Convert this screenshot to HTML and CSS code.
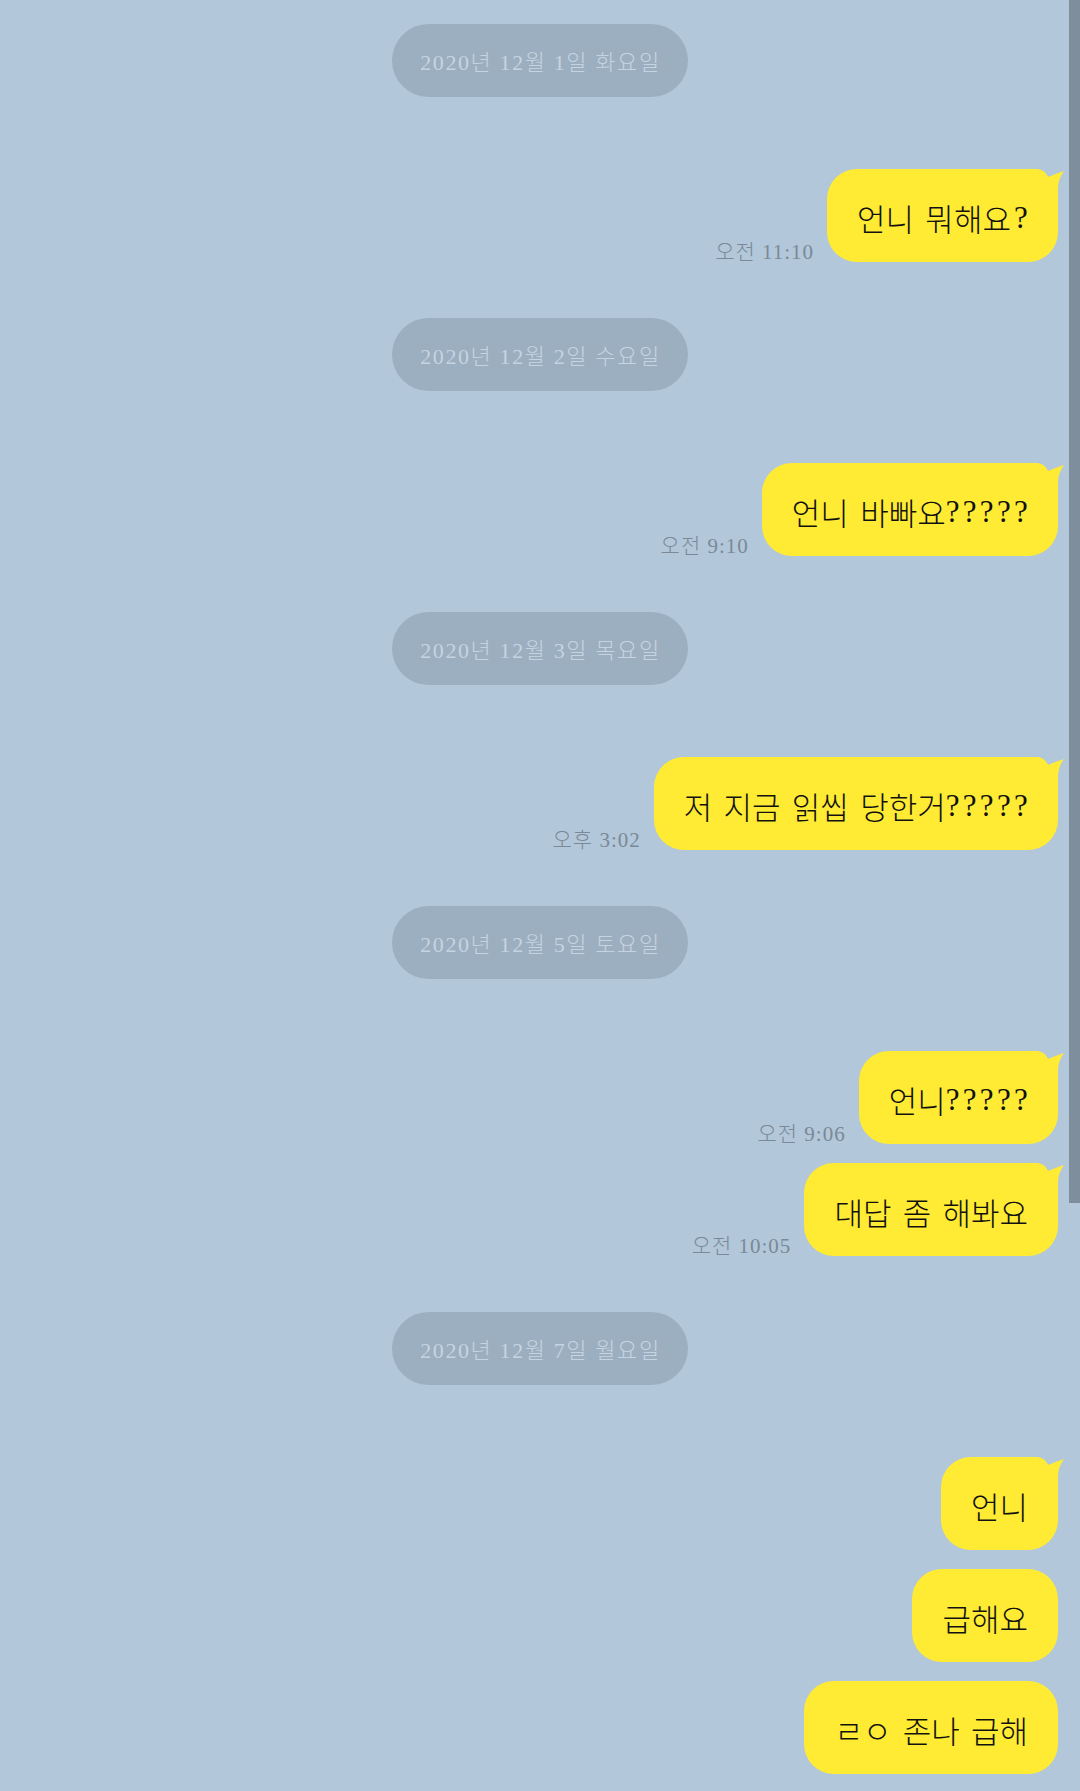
FILE: index.html
```html
<!DOCTYPE html>
<html lang="ko">
<head>
  <meta charset="UTF-8" />
  <meta name="viewport" content="width=device-width, initial-scale=1.0"/>
  <title>채팅</title>
  <link rel="stylesheet" href="styles.css">
</head>
<body>
  <div class="chat">
    <div class="date">2020년 12월 1일 화요일</div>
    <div class="row">
      <span class="time">오전 11:10</span>
      <div class="bubble tail">언니 뭐해요<span class="q wide">?</span></div>
    </div>

    <div class="date">2020년 12월 2일 수요일</div>
    <div class="row">
      <span class="time">오전 9:10</span>
      <div class="bubble tail">언니 바빠요<span class="q">?????</span></div>
    </div>

    <div class="date">2020년 12월 3일 목요일</div>
    <div class="row">
      <span class="time">오후 3:02</span>
      <div class="bubble tail">저 지금 읽씹 당한거<span class="q">?????</span></div>
    </div>

    <div class="date">2020년 12월 5일 토요일</div>
    <div class="row">
      <span class="time">오전 9:06</span>
      <div class="bubble tail">언니<span class="q">?????</span></div>
    </div>
    <div class="row">
      <span class="time">오전 10:05</span>
      <div class="bubble tail">대답 좀 해봐요</div>
    </div>

    <div class="date">2020년 12월 7일 월요일</div>
    <div class="row">
      <div class="bubble tail">언니</div>
    </div>
    <div class="row">
      <div class="bubble">급해요</div>
    </div>
    <div class="row">
      <div class="bubble">ㄹㅇ 존나 급해</div>
    </div>
  </div>

  <div class="scrollbar"></div>
</body>
</html>
```

FILE: styles.css
```css
body {
  margin: 0;
  background-color: #b2c7d9;
  font-family: "Liberation Serif", "Noto Sans CJK KR", serif;
  font-weight: 300;
  overflow: hidden;
}
.chat {
  display: flex;
  flex-direction: column;
  padding: 24px 22px 0 0;
}
.date {
  align-self: center;
  height: 73px;
  padding: 0 27px 1px 28px;
  margin: 0 0 72px 22px;
  border-radius: 37px;
  background-color: #9cafc0;
  color: #c6d4e1;
  font-size: 22px;
  letter-spacing: 1.6px;
  display: flex;
  align-items: center;
  box-sizing: border-box;
}
.row {
  display: flex;
  justify-content: flex-end;
  align-items: flex-end;
  gap: 13px;
}
.row + .row {
  margin-top: 19px;
}
.row + .date {
  margin-top: 56px;
}
.time {
  color: #7b8997;
  font-size: 21px;
  line-height: 26px;
  letter-spacing: 1px;
  margin-bottom: -3px;
}
.bubble {
  position: relative;
  height: 93px;
  padding: 4px 30px 0;
  border-radius: 30px;
  background-color: #ffeb33;
  color: #111;
  font-size: 31px;
  word-spacing: 3.5px;
  display: flex;
  align-items: center;
  box-sizing: border-box;
}
.q {
  letter-spacing: 3.3px;
  margin-right: -3px;
}
.q.wide {
  margin-left: 3px;
}
.tail::after {
  content: "";
  position: absolute;
  top: 0;
  right: -6px;
  width: 36px;
  height: 30px;
  background-color: #ffeb33;
  clip-path: path("M0 0 L10 0 Q17 1 20 8 Q27 5 36 2 Q30 10 30 20 L30 30 L0 30 Z");
}
.scrollbar {
  position: absolute;
  top: 0;
  right: 0;
  width: 11px;
  height: 1203px;
  background-color: #7f8e9c;
}
```
